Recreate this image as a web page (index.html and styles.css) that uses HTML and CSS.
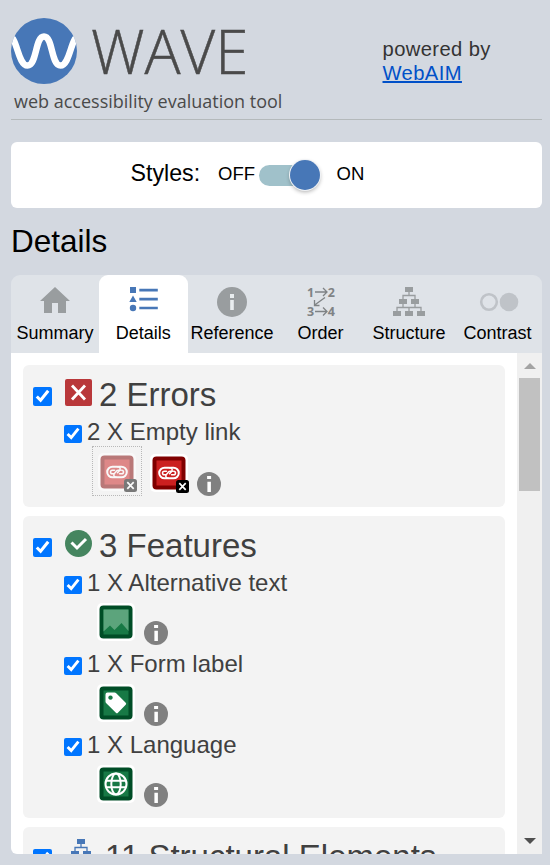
FILE: index.html
```html
<!DOCTYPE html>
<html lang="en">
<head>
<meta charset="utf-8">
<title>WAVE</title>
<link rel="stylesheet" href="styles.css">
</head>
<body>
<svg class="defs" width="0" height="0">
  <defs>
    <symbol id="info" viewBox="0 0 24 24"><circle cx="12" cy="12" r="12" fill="#808080"/><path d="M10.100 4h4v3h-4zM10.400 9.700h3.500v10.300h-3.500z" fill="#fff"/></symbol>
    <symbol id="tree" viewBox="0 0 32 29"><path d="M12 0h8v5h-8zM6 12h8v5H6zM18 12h8v5h-8zM0 24h8v5H0zM12 24h8v5h-8zM24 24h8v5h-8z" fill="currentColor"/><path d="M16 5v4M10 12V8.500h12V12M10 17v3.500M22 17v3.500M4 24v-3.500h24V24M16 20.500V24" fill="none" stroke="currentColor" stroke-width="1.300"/></symbol>
    <symbol id="link" viewBox="0 0 38 38">
      <rect width="38" height="38" rx="5" fill="#fff"/><rect x="2.500" y="2.500" width="33" height="33" rx="4" fill="#800000"/><rect x="6.500" y="6.500" width="25" height="25" fill="#cb2020"/>
      <g fill="none" stroke="#fff" stroke-width="2" stroke-linecap="round"><path d="M17.500 24.300h-3a5.300 5.300 0 0 1 0-10.600h5M20.500 13.700h3a5.300 5.300 0 0 1 0 10.600h-5"/><path d="M22.500 17.200h-2.500c-2.500 0-2.300 3.600-4.500 3.600h-1.200a1.800 1.800 0 0 1 0-3.600h2.200M15.500 20.800M21.500 20.800h2.200a1.800 1.800 0 0 0 0-3.600M19.500 13.700c3 0 3.500 2.500 1.500 4.500l-1.500 1.500M18.500 24.300c-3 0-3.500-2.500-1.500-4.500" stroke-width="1.500"/></g>
    </symbol>
    <symbol id="badge" viewBox="0 0 13 13"><rect width="13" height="13" rx="2.500"/><path d="M3.300 3.200l6.400 6.600M9.700 3.200L3.300 9.800" stroke="#fff" stroke-width="1.700"/></symbol>
    <symbol id="tile" viewBox="0 0 38 38"><rect width="38" height="38" rx="5" fill="#fff"/><rect x="2.500" y="2.500" width="33" height="33" rx="4" fill="#004d26"/><rect x="6.500" y="6.500" width="25" height="25" fill="#177945"/></symbol>
  </defs>
</svg>
<header class="header">
  <div class="brand">
    <div class="logo">
      <svg width="66" height="66" viewBox="0 0 66 66"><defs><clipPath id="disc"><circle cx="33" cy="33" r="33"/></clipPath></defs><circle cx="33" cy="33" r="33" fill="#4777b7"/><path clip-path="url(#disc)" d="M-1 19C6 19 7 47.500 16.500 47.500C26 47.500 24 18.500 33 18.500C42 18.500 40 47.500 49.500 47.500C59 47.500 60 19 67 19" fill="none" stroke="#fff" stroke-width="6.500"/></svg>
      <span class="wordmark">WAVE</span>
    </div>
    <div class="tagline">web accessibility evaluation tool</div>
  </div>
  <div class="powered">powered by<br><a href="#">WebAIM</a></div>
</header>
<section class="styles">
  <span class="styles-label">Styles:</span><span class="off">OFF</span>
  <span class="switch"><span class="knob"></span></span><span class="on">ON</span>
</section>
<h2>Details</h2>
<nav class="tabs">
  <div class="tab"><svg width="30" height="30" viewBox="0 0 30 30" fill="#999d9f"><path d="M15 0L0 14h4v12h8V16h6v10h8V14h4z"/></svg><span>Summary</span></div>
  <div class="tab active"><svg width="30" height="30" viewBox="0 0 30 30" fill="#4777b7"><path d="M2 0h6v6H2zM1.300 15L5 8.500L8.700 15z"/><circle cx="5" cy="21" r="3.200"/><path d="M11.300 1.800H29.800v2.600H11.300zM11.300 10.800H29.800v2.600H11.300zM11.300 19.700H29.800v2.600H11.300z"/></svg><span>Details</span></div>
  <div class="tab"><svg width="30" height="30" viewBox="0 0 30 30"><circle cx="15" cy="15" r="15" fill="#999d9f"/><path d="M13 7h4v4h-4zM13.200 13h3.600v10h-3.600z" fill="#e9edef"/></svg><span>Reference</span></div>
  <div class="tab"><svg width="30" height="30" viewBox="0 0 30 30" class="order"><text x="1" y="9.500">1</text><text x="21.800" y="9.500">2</text><text x="1" y="29">3</text><text x="21.800" y="29">4</text><path d="M9 5h12M17 1l4 4-4 4M9 24.500h12M17 20.500l4 4-4 4M19 10.500L8 18.500M8.500 13v5.500h5"/></svg><span>Order</span></div>
  <div class="tab"><svg class="structure" width="32" height="29"><use href="#tree"/></svg><span>Structure</span></div>
  <div class="tab"><svg width="40" height="30" viewBox="0 0 40 30"><circle cx="11" cy="15" r="7.800" fill="none" stroke="#bfc3c8" stroke-width="2.600"/><circle cx="31" cy="15" r="9.300" fill="#bfc3c8"/></svg><span>Contrast</span></div>
</nav>
<main class="panel">
  <div class="content">
    <section class="group">
      <h3><input type="checkbox" checked><svg width="27" height="27" viewBox="0 0 27 27"><rect width="27" height="27" rx="2" fill="#b9383a"/><path d="M7 6.500l13 14M20 6.500l-13 14" stroke="#fff" stroke-width="2.800"/></svg><span>2 Errors</span></h3>
      <div class="item"><h4><input type="checkbox" checked><span>2 X Empty link</span></h4>
        <div class="icons errors"><span class="icon hidden"><svg width="38" height="39"><g opacity=".5"><use href="#link" width="38" height="38"/><use href="#badge" x="26" y="26" width="13" height="13"/></g></svg></span><span class="icon"><svg width="38" height="39"><use href="#link" width="38" height="38"/><use href="#badge" x="26" y="26" width="13" height="13"/></svg></span><svg class="info" width="24" height="24"><use href="#info"/></svg></div></div>
    </section>
    <section class="group">
      <h3><input type="checkbox" checked><svg width="27" height="27" viewBox="0 0 27 27"><circle cx="13.500" cy="13.500" r="13.500" fill="#45855f"/><path d="M6.500 12.500l5.500 5.500 9-9" fill="none" stroke="#fff" stroke-width="3"/></svg><span>3 Features</span></h3>
      <div class="item"><h4><input type="checkbox" checked><span>1 X Alternative text</span></h4>
        <div class="icons"><svg width="38" height="38"><use href="#tile"/><path d="M6.500 6.500h25v21.500l-7-8-7 7-4.500-4.500-6.500 6z" fill="#5ca47c"/></svg><svg class="info" width="24" height="24"><use href="#info"/></svg></div></div>
      <div class="item"><h4><input type="checkbox" checked><span>1 X Form label</span></h4>
        <div class="icons"><svg width="38" height="38"><use href="#tile"/><path d="M10.500 8.500h7q1 0 1.700.7l9.500 9.500q1 1 0 2l-7.800 8q-1 1-2 0L9.300 19.200q-.8-.8-.8-1.800V10.500q0-2 2-2zM13.500 11.400a2.200 2.200 0 1 0 .01 0z" fill="#fff" fill-rule="evenodd"/></svg><svg class="info" width="24" height="24"><use href="#info"/></svg></div></div>
      <div class="item"><h4><input type="checkbox" checked><span>1 X Language</span></h4>
        <div class="icons"><svg width="38" height="38"><use href="#tile"/><g fill="none" stroke="#fff" stroke-width="2"><circle cx="19" cy="19" r="10.500"/><ellipse cx="19" cy="19" rx="4.700" ry="10.500"/><path d="M9.500 15.700h19M9.500 22.300h19"/></g></svg><svg class="info" width="24" height="24"><use href="#info"/></svg></div></div>
    </section>
    <section class="group">
      <h3><input type="checkbox" checked><svg class="blue" width="32" height="29"><use href="#tree"/></svg><span>11 Structural Elements</span></h3>
    </section>
  </div>
  <div class="scrollbar"><span class="up"></span><span class="thumb"></span><span class="down"></span></div>
</main>
</body>
</html>
```
FILE: styles.css
```css
* { box-sizing: border-box; }
body { margin: 0; padding: 0 8px 0 11px; height: 865px; overflow: hidden; background: #d3d8e0; color: #000; font-family: "Liberation Sans", sans-serif; }
svg { display: block; flex: none; overflow: visible; }
.defs { position: absolute; }
h2, h3, h4 { margin: 0; font-weight: 400; }
.header { display: flex; height: 120px; padding-top: 17.500px; border-bottom: 1px solid #b4b9bb; }
.brand { width: 371.500px; flex: none; }
.logo { display: flex; height: 66.500px; gap: 14px; }
.wordmark { color: #4a4a4a; font: 300 60px/66px "Open Sans", sans-serif; -webkit-text-stroke: .5px #4a4a4a; }
.tagline { margin: 5px 0 0 3px; color: #4a4a4a; font: 18px/25px "Open Sans", sans-serif; white-space: nowrap; }
.powered { padding-top: 19.500px; font-size: 20.200px; line-height: 24px; color: #333; letter-spacing: .4px; }
.powered a { color: #0050c8; text-decoration-thickness: 2px; }
.styles { display: flex; align-items: center; margin-top: 22px; height: 66px; padding-left: 119.500px; background: #fff; border-radius: 6px; font-size: 18.500px; }
.styles-label { width: 87.500px; font-size: 23.200px; margin-top: -3px; }
.off { width: 41px; margin-top: -2px; }
.switch { display: flex; align-items: center; justify-content: flex-end; width: 61px; height: 21px; border-radius: 11px; background: #a0c1ca; }
.knob { width: 30px; height: 30px; flex: none; border-radius: 50%; background: #4777b7; box-shadow: 0 0 0 1px #f0f2f5, 0 2px 4px #0005; }
.on { margin: -2px 0 0 16.500px; }
h2 { height: 67px; font-size: 31.500px; line-height: 66px; }
.tabs { display: grid; grid-template-columns: repeat(6, 1fr); height: 78px; background: #dfe3e8; border-radius: 9px 9px 0 0; }
.tab { display: flex; flex-direction: column; align-items: center; justify-content: space-between; padding: 12px .5px 8px 0; font-size: 18px; line-height: 24px; }
.active { background: #fff; border-radius: 9px 9px 0 0; margin-left: -.5px; }
.structure { color: #999d9f; }
.order text { font: 700 12.500px "Open Sans", sans-serif; fill: #7f8385; }
.order path { fill: none; stroke: #7f8385; stroke-width: 1.300; }
.panel { display: flex; height: 501px; overflow: hidden; background: #fff; border-radius: 0 0 0 6px; }
.content { width: 506px; padding: 12px; }
.group { width: 482px; padding: 10px 0 7px 10px; margin-bottom: 9px; border-radius: 6px; background: #f3f3f3; color: #404040; }
.group:first-child { padding-bottom: 9px; }
h3 { display: flex; height: 42px; font-size: 33px; line-height: 40px; white-space: nowrap; }
h3 input { width: 19px; height: 19px; margin: 12px 13px 0 0; flex: none; }
h3 svg { margin: 4px 7px 0 0; }
h3 .blue { margin: 2px 8px 0 0; color: #4777b7; }
.item { height: 81px; margin-left: 31px; }
h4 { display: flex; height: 30px; font-size: 24px; line-height: 30px; white-space: nowrap; }
h4 input { width: 18px; height: 18px; margin: 8px 5px 0 0; }
input { accent-color: #0075ff; }
.icons { display: flex; padding: 4.500px 0 0 32.500px; height: 51px; }
.icons .info { margin: 18.500px 0 0 9.500px; }
.icons.errors { padding: 0 0 0 28px; }
.icon { width: 50px; height: 50px; padding: 5.500px 4.500px; margin-top: -1px; }
.icon + .icon { margin-left: 1px; padding: 7.500px 6.500px; }
.icon.hidden { border: 1px dotted #b8b8b8; }
.icons.errors .info { margin: 25px 0 0 4px; }
.scrollbar { display: flex; flex-direction: column; align-items: center; width: 25px; background: #f0f0f0; }
.up, .down { border: solid transparent; border-width: 0 6px; }
.up { margin-top: 10px; border-bottom: 6px solid #a3a3a3; }
.thumb { width: 21px; height: 113px; margin-top: 9px; background: #c1c1c1; }
.down { margin-top: auto; margin-bottom: 10px; border-top: 6px solid #505050; }
```
